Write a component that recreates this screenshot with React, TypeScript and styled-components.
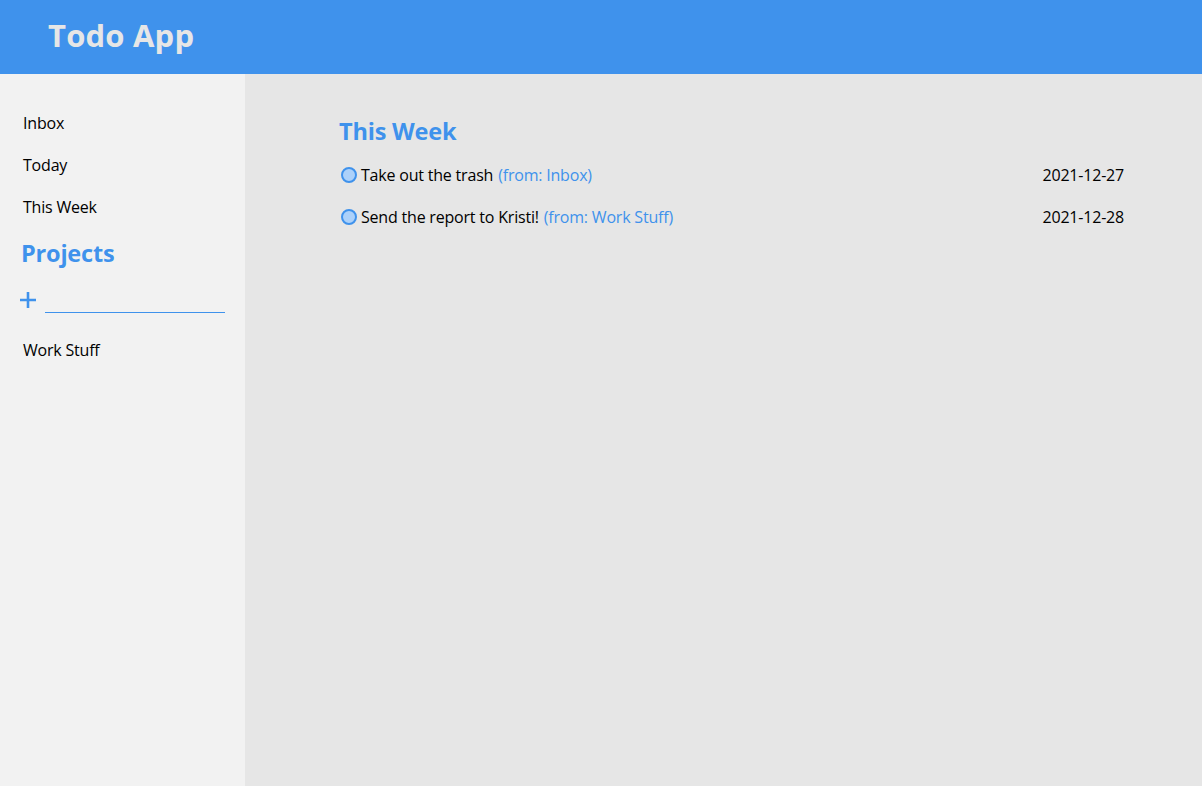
import React from "react";
import styled, { createGlobalStyle } from "styled-components";

const Global = createGlobalStyle`
  html, body { margin: 0; padding: 0; }
  body {
    font-family: "Open Sans", "Noto Sans", sans-serif;
    background: #e6e6e6;
    color: #000;
  }
  * { box-sizing: border-box; }
`;

const Page = styled.div`
  width: 1202px;
  height: 786px;
  display: flex;
  flex-direction: column;
  overflow: hidden;
`;

const Header = styled.header`
  height: 74px;
  flex: none;
  background: #3f92ec;
  display: flex;
  align-items: center;
  padding-left: 48px;
  padding-bottom: 5px;
`;

const Title = styled.h1`
  margin: 0;
  font-size: 31px;
  font-weight: 700;
  color: #e6e6e6;
  letter-spacing: 0.2px;
`;

const Body = styled.div`
  flex: 1;
  display: flex;
  min-height: 0;
`;

const Sidebar = styled.nav`
  width: 245px;
  flex: none;
  background: #f2f2f2;
  padding: 28px 20px 0 20px;
  display: flex;
  flex-direction: column;
`;

const NavItem = styled.div<{ $mt?: number }>`
  height: 42px;
  margin-top: ${(p) => p.$mt ?? 0}px;
  display: flex;
  align-items: center;
  padding-left: 3px;
  font-size: 16px;
  letter-spacing: -0.2px;
`;

const SectionTitle = styled.h2<{ $mt?: number; $ml?: number }>`
  margin: ${(p) => p.$mt ?? 0}px 0 0 ${(p) => p.$ml ?? 0}px;
  height: 30px;
  display: flex;
  align-items: center;
  font-size: 23.5px;
  font-weight: 700;
  color: #3f92ec;
  letter-spacing: -0.2px;
`;

const AddRow = styled.div`
  margin-top: 14px;
  height: 36px;
  display: flex;
  align-items: center;
  gap: 9px;
`;

const PlusIcon = styled.svg`
  width: 16px;
  height: 16px;
  flex: none;
`;

const ProjectInput = styled.input`
  width: 180px;
  height: 26px;
  padding: 0;
  border: none;
  border-bottom: 1px solid #3f92ec;
  background: transparent;
  outline: none;
  font: inherit;
`;

const Main = styled.main`
  flex: 1;
  padding: 42px 78px 0 94px;
`;

const TaskRow = styled.div`
  height: 42px;
  display: flex;
  align-items: center;
  font-size: 16px;
  letter-spacing: -0.2px;
  padding-left: 2px;
`;

const Check = styled.span`
  width: 16px;
  height: 16px;
  border-radius: 50%;
  border: 2px solid #3f92ec;
  background: #acd1fa;
  margin-right: 4px;
  flex: none;
`;

const Source = styled.span`
  color: #3f92ec;
  margin-left: 5px;
`;

const DueDate = styled.span`
  margin-left: auto;
`;

const TaskList = styled.div`
  margin-top: 8px;
`;

const tasks = [
  { title: "Take out the trash", from: "Inbox", date: "2021-12-27" },
  { title: "Send the report to Kristi!", from: "Work Stuff", date: "2021-12-28" },
];

export default function App() {
  return (
    <Page>
      <Global />
      <Header>
        <Title>Todo App</Title>
      </Header>
      <Body>
        <Sidebar>
          <NavItem>Inbox</NavItem>
          <NavItem>Today</NavItem>
          <NavItem>This Week</NavItem>
          <SectionTitle $mt={10} $ml={1}>Projects</SectionTitle>
          <AddRow>
            <PlusIcon viewBox="0 0 16 16">
              <path d="M8 0V16M0 8H16" stroke="#3f92ec" strokeWidth="2.6" fill="none" />
            </PlusIcon>
            <ProjectInput />
          </AddRow>
          <NavItem $mt={11}>Work Stuff</NavItem>
        </Sidebar>
        <Main>
          <SectionTitle>This Week</SectionTitle>
          <TaskList>
            {tasks.map((t) => (
              <TaskRow key={t.title}>
                <Check />
                <span>{t.title}</span>
                <Source>(from: {t.from})</Source>
                <DueDate>{t.date}</DueDate>
              </TaskRow>
            ))}
          </TaskList>
        </Main>
      </Body>
    </Page>
  );
}
